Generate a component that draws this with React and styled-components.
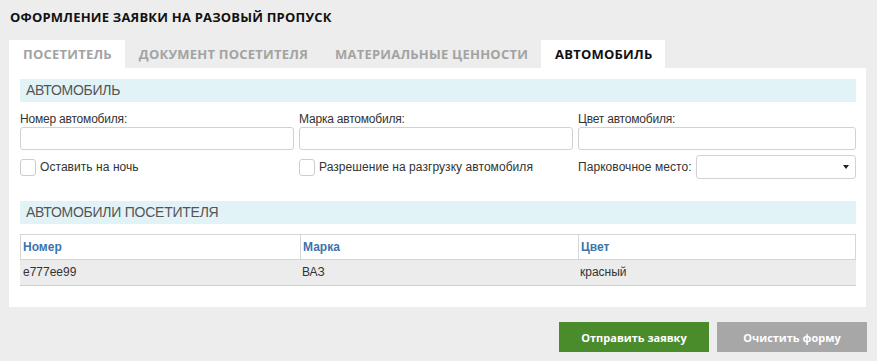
import React from "react";
import styled, { createGlobalStyle } from "styled-components";

const Global = createGlobalStyle`
  html, body { margin: 0; padding: 0; background: #ededed; }
  body { font-family: "Liberation Sans", Arial, sans-serif; }
  * { box-sizing: border-box; }
`;

const Page = styled.div`
  width: 877px;
  height: 361px;
  background: #ededed;
  padding: 8px 11px 0 9px;
  display: flex;
  flex-direction: column;
`;

const Title = styled.h1`
  margin: 0 0 0 1px;
  font-family: "Open Sans", sans-serif;
  font-weight: 700;
  font-size: 13px;
  line-height: 18px;
  color: #111;
  letter-spacing: 0.2px;
`;

const Tabs = styled.div`
  display: flex;
  margin-top: 14px;
  height: 28px;
`;

const Tab = styled.div`
  font-family: "Open Sans", sans-serif;
  font-weight: 700;
  font-size: 13px;
  letter-spacing: 0.22px;
  line-height: 28px;
  padding: 0 13px 0 14px;
  color: ${(p) => (p.$active ? "#111" : "#a3a3a3")};
  background: ${(p) => (p.$white ? "#fff" : "transparent")};
  white-space: nowrap;
`;

const Panel = styled.div`
  background: #fff;
  padding: 11px 10px 21px 11px;
`;

const SectionHead = styled.div`
  background: #e2f3f8;
  height: 23px;
  line-height: 23px;
  padding-left: 6px;
  font-size: 14px;
  letter-spacing: -0.25px;
  color: #555;
  margin-top: ${(p) => p.$mt || 0}px;
`;

const Grid = styled.div`
  display: grid;
  grid-template-columns: 274px 274px 278px;
  column-gap: 5px;
  margin-top: 10px;
`;

const Field = styled.div`
  display: flex;
  flex-direction: column;
`;

const Label = styled.label`
  font-size: 12px;
  line-height: 15px;
  color: #333;
  letter-spacing: -0.2px;
`;

const Input = styled.div`
  height: 23px;
  border: 1px solid #d2d2d2;
  border-radius: 3px;
  background: #fff;
`;

const CheckRow = styled.div`
  display: flex;
  align-items: center;
  gap: 4px;
  height: 24px;
  margin-top: ${(p) => p.$mt || 0}px;
`;

const Box = styled.span`
  width: 16px;
  height: 17px;
  border: 1px solid #cdcdcd;
  border-radius: 3px;
  background: #fff;
  flex: none;
`;

const CheckText = styled.span`
  font-size: 12px;
  color: #333;
  letter-spacing: 0.06px;
`;

const Select = styled.div`
  flex: 1;
  height: 24px;
  border: 1px solid #d2d2d2;
  border-radius: 3px;
  display: flex;
  align-items: center;
  justify-content: flex-end;
  padding-right: 6px;
`;

const Caret = styled.span`
  width: 0;
  height: 0;
  border-left: 3.5px solid transparent;
  border-right: 3.5px solid transparent;
  border-top: 4px solid #222;
`;

const Table = styled.div`
  margin-top: 10px;
  display: flex;
  flex-direction: column;
`;

const Row = styled.div`
  display: grid;
  grid-template-columns: 279px 278px 1fr;
  height: 26px;
  background: ${(p) => (p.$head ? "#fff" : "#ececec")};
  border-top: ${(p) => (p.$head ? "1px solid #d6d6d6" : "none")};
  border-bottom: 1px solid ${(p) => (p.$head ? "#d6d6d6" : "#cfcfcf")};
  border-left: ${(p) => (p.$head ? "1px solid #d6d6d6" : "none")};
  border-right: ${(p) => (p.$head ? "1px solid #d6d6d6" : "none")};
`;

const Cell = styled.div`
  font-size: 12px;
  line-height: 24px;
  padding-left: ${(p) => (p.$head ? 2 : 3)}px;
  color: ${(p) => (p.$head ? "#3b73ad" : "#333")};
  font-weight: ${(p) => (p.$head ? 700 : 400)};
  border-left: ${(p) => (p.$head && !p.$first ? "1px solid #d6d6d6" : "none")};
`;

const Actions = styled.div`
  display: flex;
  justify-content: flex-end;
  gap: 8px;
  margin-top: 15px;
  margin-right: -1px;
`;

const Button = styled.button`
  width: 150px;
  height: 30px;
  border: none;
  background: ${(p) => (p.$primary ? "#4a8c2b" : "#a7a7a7")};
  color: #fff;
  font-family: "Open Sans", sans-serif;
  font-weight: 700;
  font-size: 11px;
  cursor: pointer;
`;

export default function App() {
  return (
    <>
      <Global />
      <Page>
        <Title>ОФОРМЛЕНИЕ ЗАЯВКИ НА РАЗОВЫЙ ПРОПУСК</Title>
        <Tabs>
          <Tab $white>ПОСЕТИТЕЛЬ</Tab>
          <Tab>ДОКУМЕНТ ПОСЕТИТЕЛЯ</Tab>
          <Tab>МАТЕРИАЛЬНЫЕ ЦЕННОСТИ</Tab>
          <Tab $white $active>АВТОМОБИЛЬ</Tab>
        </Tabs>
        <Panel>
          <SectionHead>АВТОМОБИЛЬ</SectionHead>
          <Grid>
            <Field>
              <Label>Номер автомобиля:</Label>
              <Input />
            </Field>
            <Field>
              <Label>Марка автомобиля:</Label>
              <Input />
            </Field>
            <Field>
              <Label>Цвет автомобиля:</Label>
              <Input />
            </Field>
            <CheckRow $mt={5}>
              <Box />
              <CheckText>Оставить на ночь</CheckText>
            </CheckRow>
            <CheckRow $mt={5}>
              <Box />
              <CheckText>Разрешение на разгрузку автомобиля</CheckText>
            </CheckRow>
            <CheckRow $mt={5}>
              <CheckText>Парковочное место:</CheckText>
              <Select>
                <Caret />
              </Select>
            </CheckRow>
          </Grid>
          <SectionHead $mt={22}>АВТОМОБИЛИ ПОСЕТИТЕЛЯ</SectionHead>
          <Table>
            <Row $head>
              <Cell $head $first>Номер</Cell>
              <Cell $head>Марка</Cell>
              <Cell $head>Цвет</Cell>
            </Row>
            <Row>
              <Cell $first>e777ee99</Cell>
              <Cell>ВАЗ</Cell>
              <Cell>красный</Cell>
            </Row>
          </Table>
        </Panel>
        <Actions>
          <Button $primary>Отправить заявку</Button>
          <Button>Очистить форму</Button>
        </Actions>
      </Page>
    </>
  );
}
